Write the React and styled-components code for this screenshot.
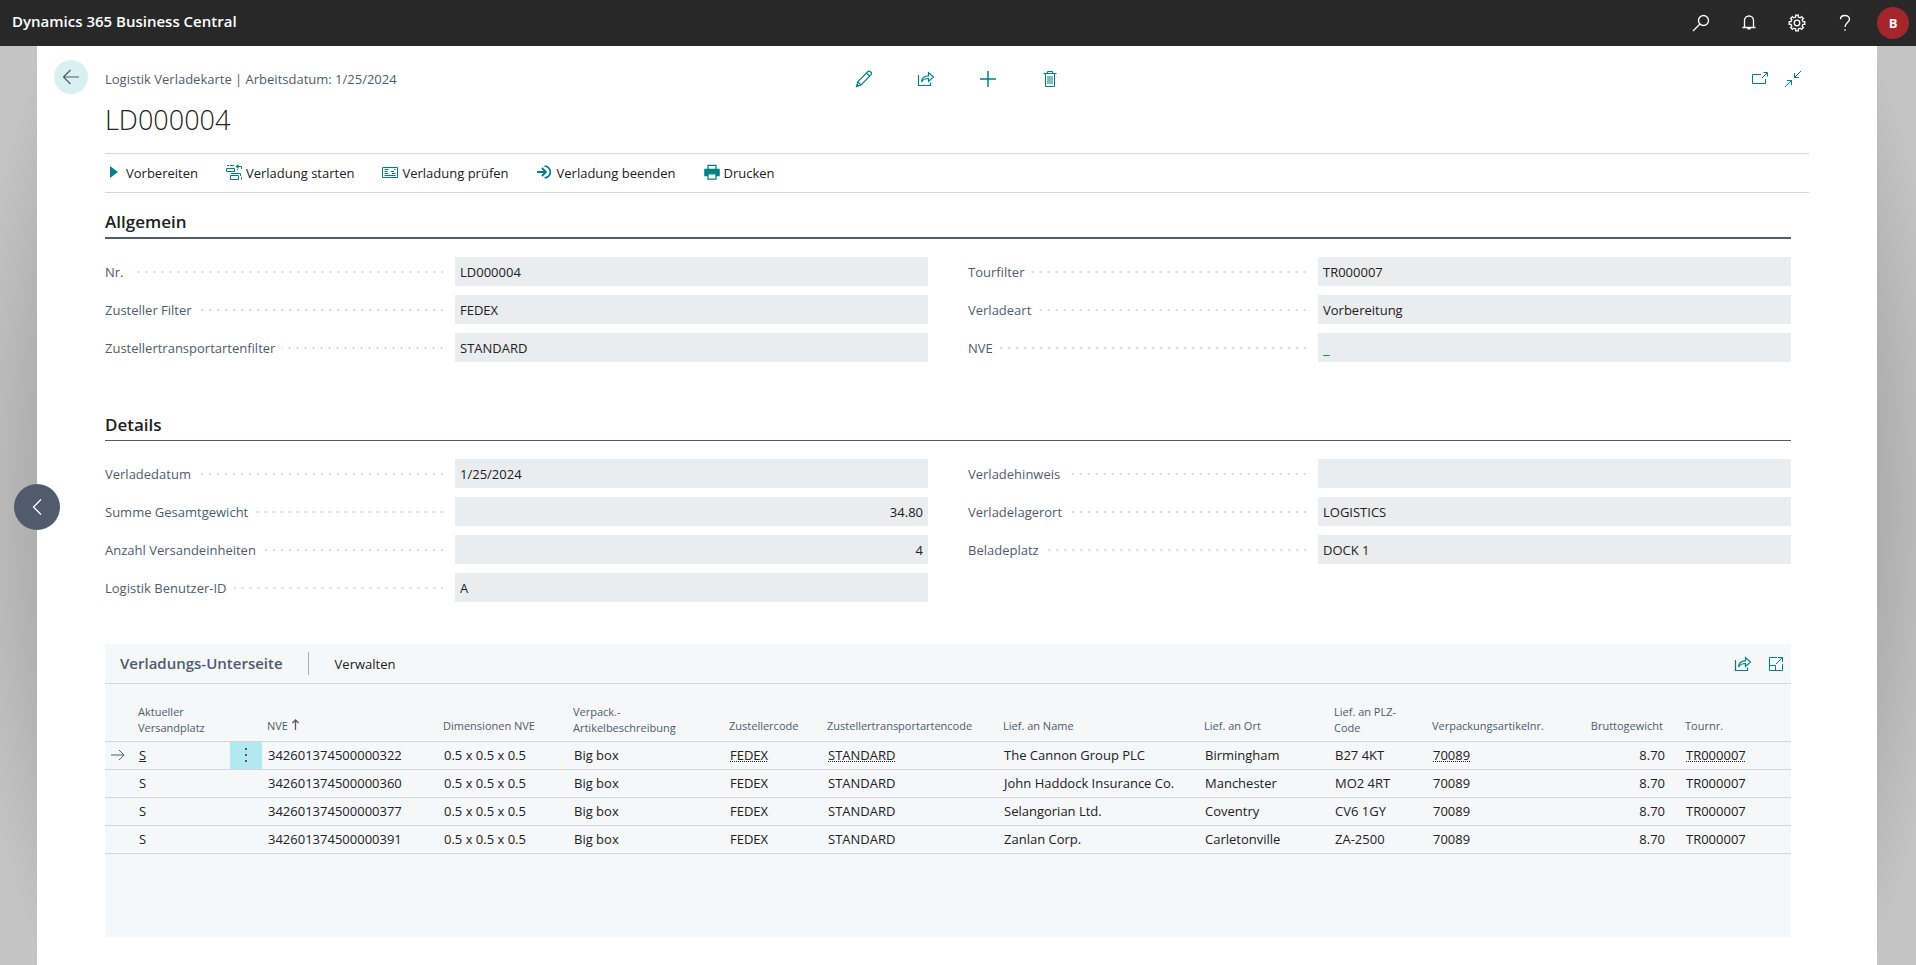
import React from "react";
import styled, { createGlobalStyle, css } from "styled-components";

const GlobalStyle = createGlobalStyle`
  * {
    box-sizing: border-box;
  }

  body {
    margin: 0;
    background: #c4c4c4;
    color: #212121;
    font-family: "Open Sans", "Noto Sans", sans-serif;
    font-size: 13px;
    line-height: 18px;
  }

  button,
  input {
    font: inherit;
    color: inherit;
  }

  button {
    padding: 0;
    border: 0;
    background: none;
    cursor: pointer;
  }
`;

const Shell = styled.div`
  display: flex;
  flex-direction: column;
  height: 100vh;
  overflow: hidden;
`;

const TopBar = styled.header`
  display: flex;
  flex: none;
  align-items: center;
  justify-content: space-between;
  height: 46px;
  padding: 0 7px 4px 12px;
  background: #282828;
  color: #fff;
  z-index: 2;
`;

const Product = styled.span`
  font-size: 15px;
  font-weight: 600;
`;

const TopActions = styled.div`
  display: flex;
  align-items: center;
  gap: 16px;
  padding-top: 3px;
`;

const TopButton = styled.button`
  display: flex;
  align-items: center;
  justify-content: center;
  width: 32px;
  height: 32px;
`;

const Avatar = styled(TopButton)`
  border-radius: 50%;
  background: #a4262c;
  font-size: 13px;
  font-weight: 700;
`;

const Stage = styled.div`
  position: relative;
  display: flex;
  flex: 1;
  padding: 0 39px 0 37px;
  background: radial-gradient(ellipse 55% 130% at center, #adadad 87%, #b9b9b9 91%, #c4c4c4 95%);
`;

const Card = styled.main`
  flex: 1;
  min-width: 0;
  padding: 14px 68px 0 17px;
  background: #fff;
`;

const PreviousButton = styled.button`
  position: absolute;
  left: 14px;
  top: 438px;
  display: flex;
  align-items: center;
  justify-content: center;
  width: 46px;
  height: 46px;
  border-radius: 50%;
  background: #505c6d;
`;

const PageHead = styled.div`
  display: grid;
  grid-template-columns: 34px 1fr;
  column-gap: 17px;
`;

const BackButton = styled.button`
  display: flex;
  align-items: center;
  justify-content: center;
  width: 34px;
  height: 34px;
  border-radius: 50%;
  background: #d9f0f2;
`;

const HeadLine = styled.div`
  display: grid;
  grid-template-columns: 1fr auto 1fr;
  align-items: center;
  height: 34px;
  padding-top: 4px;
`;

const Caption = styled.span`
  color: #505c6d;
`;

const RecordActions = styled.div`
  display: flex;
  gap: 44px;
`;

const WindowActions = styled.div`
  display: flex;
  justify-content: flex-end;
  gap: 15px;
  padding-right: 7px;
`;

const IconButton = styled.button`
  display: flex;
  width: 18px;
  height: 18px;
`;

const Title = styled.h1`
  grid-column: 2;
  margin: 8px 0 15px;
  font-size: 27px;
  font-weight: 300;
  line-height: 36px;
`;

const ActionBar = styled.div`
  display: flex;
  gap: 28px;
  height: 40px;
  margin-left: 51px;
  padding-left: 4px;
  border-top: 1px solid #d4d6d9;
  border-bottom: 1px solid #d4d6d9;
`;

const Action = styled.button`
  display: flex;
  align-items: center;
  gap: 4px;

  svg {
    margin-bottom: 2px;
  }
`;

const Sections = styled.div`
  margin: 15px 18px 0 51px;
`;

const Group = styled.section`
  margin-bottom: 49px;
`;

const GroupTitle = styled.h2`
  margin: 0 0 18px;
  padding-bottom: 1px;
  border-bottom: ${({ $thick }) => ($thick ? 2 : 1)}px solid #505c6d;
  font-size: 17px;
  font-weight: 600;
  line-height: 28px;
`;

const Fields = styled.div`
  display: grid;
  grid-template-columns: 1fr 1fr;
  column-gap: 40px;
`;

const FieldColumn = styled.div`
  display: flex;
  flex-direction: column;
  gap: 9px;
`;

const FieldRow = styled.div`
  display: flex;
  align-items: center;
  height: 29px;
`;

const FieldLabel = styled.label`
  display: flex;
  flex: 1;
  align-items: center;
  padding-right: 12px;
  color: #505c6d;
  white-space: nowrap;

  &::after {
    content: "";
    flex: 1;
    height: 2px;
    margin: 1px 0 0 7px;
    background: linear-gradient(90deg, transparent 6px, #d6d7d9 6px) right top / 8px 2px;
  }
`;

const FieldInput = styled.input`
  width: 473px;
  height: 29px;
  padding: 0 5px;
  border: 0;
  background: #ebecee;
  text-align: ${({ $numeric }) => ($numeric ? "right" : "left")};
  ${({ $link }) =>
    $link &&
    css`
      color: #008089;
      font-size: 15px;
    `}
`;

const ListPart = styled.section`
  height: 293px;
  margin-top: -7px;
  background: #f6f7f9;
`;

const ListHead = styled.div`
  display: flex;
  align-items: center;
  height: 40px;
  padding: 0 6px 0 15px;
  border-bottom: 1px solid #d4d6d9;
`;

const ListTitle = styled.h2`
  margin: 0;
  padding-right: 25px;
  border-right: 1px solid #a9aeb5;
  color: #505c6d;
  font-size: 15px;
  font-weight: 600;
  line-height: 23px;
`;

const ListMenu = styled.button`
  margin: 1px auto 0 26px;
`;

const ListIcons = styled.div`
  display: flex;
  gap: 15px;
`;

const Table = styled.table`
  width: 100%;
  table-layout: fixed;
  border-collapse: collapse;
`;

const Th = styled.th`
  height: 57px;
  padding: 0 ${({ $numeric }) => ($numeric ? 17 : 0)}px ${({ $twoLines }) => ($twoLines ? 5 : 7)}px 5px;
  border-bottom: 1px solid #d4d6d9;
  color: #505c6d;
  font-size: 11px;
  font-weight: 400;
  line-height: 16px;
  text-align: ${({ $numeric }) => ($numeric ? "right" : "left")};
  vertical-align: bottom;
  white-space: pre-line;
`;

const Td = styled.td`
  height: 28px;
  padding: ${({ $numeric }) => ($numeric ? "0 15px 0 0" : "0 0 0 6px")};
  border-bottom: 1px solid #d4d6d9;
  text-align: ${({ $numeric }) => ($numeric ? "right" : "left")};
  white-space: nowrap;
`;

const CellLink = styled.a`
  color: inherit;
  text-decoration: underline ${({ $solid }) => ($solid ? "solid" : "dotted")} 1px;
  text-underline-offset: 1px;
`;

const RowMenu = styled.button`
  display: flex;
  align-items: center;
  justify-content: center;
  width: 32px;
  height: 27px;
  margin-left: -6px;
  background: #b3e8f0;
`;

const RowArrow = styled.span`
  display: flex;
`;

const TEAL = "#008089";

function Icon({ size = 18, color = TEAL, width = 1, children }) {
  return (
    <svg
      width={size}
      height={size}
      viewBox="0 0 18 18"
      fill="none"
      stroke={color}
      strokeWidth={width}
      aria-hidden="true"
    >
      {children}
    </svg>
  );
}

const SearchIcon = () => (
  <Icon color="#fff" width={1.3}>
    <circle cx="11.5" cy="6.5" r="5" />
    <path d="M8 10 L1 17" />
  </Icon>
);

const BellIcon = () => (
  <Icon color="#fff" width={1.3}>
    <path d="M2.5 13.5h13M4.500 13.500V6.500a4.500 4.500 0 0 1 9 0v7M7.500 14a1.600 1.600 0 0 0 3 0" />
  </Icon>
);

const GearIcon = () => {
  const teeth = [];
  for (let i = 0; i < 8; i += 1) {
    const a = (i * Math.PI) / 4;
    [
      [6.1, -0.22],
      [7.9, -0.17],
      [7.9, 0.17],
      [6.1, 0.22],
    ].forEach(([r, d]) => {
      teeth.push(`${(9 + r * Math.cos(a + d)).toFixed(2)},${(9 + r * Math.sin(a + d)).toFixed(2)}`);
    });
  }
  return (
    <Icon color="#fff" width={1.3}>
      <polygon points={teeth.join(" ")} />
      <circle cx="9" cy="9" r="2.8" />
    </Icon>
  );
};

const HelpIcon = () => (
  <Icon color="#fff" width={1.4}>
    <path d="M4.5 5.2C4.5 2.8 6.5 1.5 9 1.5s4.5 1.5 4.5 3.8C13.5 8.5 9 8.7 9 13M9 15.2v1.6" />
  </Icon>
);

const BackIcon = () => (
  <Icon color="#505c6d" width={1.2}>
    <path d="M17 9H1.5M8.5 2 1.5 9l7 7" />
  </Icon>
);

const ChevronIcon = () => (
  <Icon color="#fff" width={1.3}>
    <path d="M13 1.5 5.5 9l7.5 7.5" />
  </Icon>
);

const PencilIcon = () => (
  <Icon width={1.2}>
    <path d="M1.5 16.5 2.8 11.8 12.5 2a2 2 0 0 1 3.2 3.2L6 15ZM2.8 11.8 6 15M11.5 3l3.3 3.3M1.5 16.5l2-.6-1.4-1.4Z" />
  </Icon>
);

const ShareIcon = () => (
  <Icon width={1.2}>
    <path d="M1.5 5v10.500h12V12.500M4.500 12c.3-4.500 3-6.200 7-6.200V2.500L16.500 7l-5 4.500V8.500C8 8.500 6 9.500 4.500 12Z" />
  </Icon>
);

const PlusIcon = () => (
  <Icon width={1.5}>
    <path d="M1 9h16M9 1v16" />
  </Icon>
);

const TrashIcon = () => (
  <Icon>
    <path d="M2.5 3.5h13M6.5 3.5v-2h5v2M4.5 3.5v13h9v-13M7 6v8M9 6v8M11 6v8" />
  </Icon>
);

const PopOutIcon = () => (
  <Icon>
    <path d="M10 4.5H1.5v9h13V9M11 8l5-5M12.5 2.5h4v4" />
  </Icon>
);

const CollapseIcon = () => (
  <Icon>
    <path d="M17 1l-6.5 6.5M10.5 3v4.5H15M1 17l6.5-6.5M3 10.5h4.5V15" />
  </Icon>
);

const ExpandIcon = () => (
  <Icon>
    <path d="M10 2.5H2.5v13h13V9M11 2.5h4.5V7M15.5 2.5 9 9M2.5 10.500h6v5" />
  </Icon>
);

const PlayIcon = () => (
  <svg width="13" height="18" viewBox="0 0 13 18" aria-hidden="true">
    <path d="M1 3v12l8-6Z" fill={TEAL} />
  </svg>
);

const StartIcon = () => (
  <svg width="16" height="16" viewBox="0 0 16 16" fill="none" stroke={TEAL} aria-hidden="true">
    <path d="M.5 4.500h8v3h-8ZM4.500 11.500h8v4h-8ZM1 1.500h2M4 1.500h4M5 9.500h9.500V12M15.500 13v2.500M11 5.500h1M15.500 5V2.500H10" />
    <path d="M9.500 2.500 12.500 0v5Z" fill={TEAL} stroke="none" />
  </svg>
);

const CheckIcon = () => (
  <svg width="16" height="16" viewBox="0 0 16 16" fill="none" stroke={TEAL} aria-hidden="true">
    <path d="M.5 3.500h15v10H.5ZM2.500 5.500h4M2.500 7.500h3M2.500 9.500h4M2.500 11.500h11M9 7.500h3M12 5.500h1.500M10 9.500h3.500" />
  </svg>
);

const FinishIcon = () => (
  <Icon size={16}>
    <path d="M0 9h10M5.5 4.500 10 9l-4.500 4.500" strokeWidth="2.200" />
    <path d="M8.500 2.500a6.500 6.500 0 1 1 0 13" strokeWidth="2" />
  </Icon>
);

const PrintIcon = () => (
  <Icon size={16} width={1.4}>
    <path d="M4.5 6V1.500h9V6" />
    <path d="M1 6h16v7H1Z" fill={TEAL} />
    <path d="M4.5 11h9v6h-9Z" fill="#fff" />
  </Icon>
);

const DotsIcon = () => (
  <svg width="4" height="16" viewBox="0 0 4 16" fill="#505c6d" aria-hidden="true">
    <path d="M1 1h2v2H1ZM1 7h2v2H1ZM1 13h2v2H1Z" />
  </svg>
);

const ArrowRightIcon = () => (
  <svg width="14" height="14" viewBox="0 0 14 14" fill="none" stroke="#505c6d" aria-hidden="true">
    <path d="M0 7h13M8 2l5 5-5 5" />
  </svg>
);

const SortIcon = () => (
  <svg width="9" height="11" viewBox="0 0 9 11" fill="none" stroke="#505c6d" strokeWidth="1.3" aria-hidden="true">
    <path d="M4.5 11V1M1.500 4l3-3 3 3" />
  </svg>
);

const actions = [
  { label: "Vorbereiten", icon: PlayIcon },
  { label: "Verladung starten", icon: StartIcon },
  { label: "Verladung prüfen", icon: CheckIcon },
  { label: "Verladung beenden", icon: FinishIcon },
  { label: "Drucken", icon: PrintIcon },
];

const general = [
  [
    { id: "nr", label: "Nr.", value: "LD000004" },
    { id: "zusteller", label: "Zusteller Filter", value: "FEDEX" },
    { id: "transportart", label: "Zustellertransportartenfilter", value: "STANDARD" },
  ],
  [
    { id: "tour", label: "Tourfilter", value: "TR000007" },
    { id: "art", label: "Verladeart", value: "Vorbereitung" },
    { id: "nve", label: "NVE", value: "_", link: true },
  ],
];

const details = [
  [
    { id: "datum", label: "Verladedatum", value: "1/25/2024" },
    { id: "gewicht", label: "Summe Gesamtgewicht", value: "34.80", numeric: true },
    { id: "anzahl", label: "Anzahl Versandeinheiten", value: "4", numeric: true },
    { id: "benutzer", label: "Logistik Benutzer-ID", value: "A" },
  ],
  [
    { id: "hinweis", label: "Verladehinweis", value: "" },
    { id: "lagerort", label: "Verladelagerort", value: "LOGISTICS" },
    { id: "beladeplatz", label: "Beladeplatz", value: "DOCK 1" },
  ],
];

const columns = [
  { key: "arrow", label: "", width: 28 },
  { key: "place", label: "Aktueller\nVersandplatz", width: 97, link: "solid" },
  { key: "menu", label: "", width: 32 },
  { key: "nve", label: "NVE", width: 176, sorted: true },
  { key: "dim", label: "Dimensionen NVE", width: 130 },
  { key: "pack", label: "Verpack.-\nArtikelbeschreibung", width: 156 },
  { key: "carrier", label: "Zustellercode", width: 98, link: "dotted" },
  { key: "mode", label: "Zustellertransportartencode", width: 176, link: "dotted" },
  { key: "name", label: "Lief. an Name", width: 201 },
  { key: "city", label: "Lief. an Ort", width: 130 },
  { key: "zip", label: "Lief. an PLZ-\nCode", width: 98 },
  { key: "item", label: "Verpackungsartikelnr.", width: 156, link: "dotted" },
  { key: "weight", label: "Bruttogewicht", width: 97, numeric: true },
  { key: "tour", label: "Tournr.", link: "dotted" },
];

const shared = {
  place: "S",
  dim: "0.5 x 0.5 x 0.5",
  pack: "Big box",
  carrier: "FEDEX",
  mode: "STANDARD",
  item: "70089",
  weight: "8.70",
  tour: "TR000007",
};

const rows = [
  { ...shared, nve: "342601374500000322", name: "The Cannon Group PLC", city: "Birmingham", zip: "B27 4KT" },
  { ...shared, nve: "342601374500000360", name: "John Haddock Insurance Co.", city: "Manchester", zip: "MO2 4RT" },
  { ...shared, nve: "342601374500000377", name: "Selangorian Ltd.", city: "Coventry", zip: "CV6 1GY" },
  { ...shared, nve: "342601374500000391", name: "Zanlan Corp.", city: "Carletonville", zip: "ZA-2500" },
];

const ColumnDef = styled.col`
  width: ${({ $width }) => ($width ? `${$width}px` : "auto")};
`;

function FieldGroup({ title, thick, fields }) {
  return (
    <Group>
      <GroupTitle $thick={thick}>{title}</GroupTitle>
      <Fields>
        {fields.map((column) => (
          <FieldColumn key={column[0].id}>
            {column.map((field) => (
              <FieldRow key={field.id}>
                <FieldLabel htmlFor={field.id}>{field.label}</FieldLabel>
                <FieldInput
                  id={field.id}
                  defaultValue={field.value}
                  readOnly
                  $numeric={field.numeric}
                  $link={field.link}
                />
              </FieldRow>
            ))}
          </FieldColumn>
        ))}
      </Fields>
    </Group>
  );
}

function Cell({ column, row, selected }) {
  if (column.key === "arrow") {
    return selected ? (
      <RowArrow>
        <ArrowRightIcon />
      </RowArrow>
    ) : null;
  }
  if (column.key === "menu") {
    return selected ? (
      <RowMenu aria-label="Weitere Optionen">
        <DotsIcon />
      </RowMenu>
    ) : null;
  }
  if (selected && column.link) {
    return (
      <CellLink href="#" $solid={column.link === "solid"}>
        {row[column.key]}
      </CellLink>
    );
  }
  return row[column.key];
}

function Lines() {
  return (
    <ListPart>
      <ListHead>
        <ListTitle>Verladungs-Unterseite</ListTitle>
        <ListMenu>Verwalten</ListMenu>
        <ListIcons>
          <IconButton aria-label="Teilen">
            <ShareIcon />
          </IconButton>
          <IconButton aria-label="Erweitern">
            <ExpandIcon />
          </IconButton>
        </ListIcons>
      </ListHead>
      <Table>
        <colgroup>
          {columns.map((column) => (
            <ColumnDef key={column.key} $width={column.width} />
          ))}
        </colgroup>
        <thead>
          <tr>
            {columns.map((column) => (
              <Th key={column.key} $numeric={column.numeric} $twoLines={column.label.includes("\n")}>
                {column.label} {column.sorted && <SortIcon />}
              </Th>
            ))}
          </tr>
        </thead>
        <tbody>
          {rows.map((row, index) => (
            <tr key={row.nve}>
              {columns.map((column) => (
                <Td key={column.key} $numeric={column.numeric}>
                  <Cell column={column} row={row} selected={index === 0} />
                </Td>
              ))}
            </tr>
          ))}
        </tbody>
      </Table>
    </ListPart>
  );
}

function App() {
  return (
    <>
      <GlobalStyle />
      <Shell>
        <TopBar>
          <Product>Dynamics 365 Business Central</Product>
          <TopActions>
            <TopButton aria-label="Suchen">
              <SearchIcon />
            </TopButton>
            <TopButton aria-label="Benachrichtigungen">
              <BellIcon />
            </TopButton>
            <TopButton aria-label="Einstellungen">
              <GearIcon />
            </TopButton>
            <TopButton aria-label="Hilfe">
              <HelpIcon />
            </TopButton>
            <Avatar>B</Avatar>
          </TopActions>
        </TopBar>
        <Stage>
          <Card>
            <PageHead>
              <BackButton aria-label="Zurück">
                <BackIcon />
              </BackButton>
              <HeadLine>
                <Caption>Logistik Verladekarte | Arbeitsdatum: 1/25/2024</Caption>
                <RecordActions>
                  <IconButton aria-label="Bearbeiten">
                    <PencilIcon />
                  </IconButton>
                  <IconButton aria-label="Teilen">
                    <ShareIcon />
                  </IconButton>
                  <IconButton aria-label="Neu">
                    <PlusIcon />
                  </IconButton>
                  <IconButton aria-label="Löschen">
                    <TrashIcon />
                  </IconButton>
                </RecordActions>
                <WindowActions>
                  <IconButton aria-label="In neuem Fenster öffnen">
                    <PopOutIcon />
                  </IconButton>
                  <IconButton aria-label="Verkleinern">
                    <CollapseIcon />
                  </IconButton>
                </WindowActions>
              </HeadLine>
              <Title>LD000004</Title>
            </PageHead>
            <ActionBar>
              {actions.map(({ label, icon: ActionIcon }) => (
                <Action key={label}>
                  <ActionIcon />
                  {label}
                </Action>
              ))}
            </ActionBar>
            <Sections>
              <FieldGroup title="Allgemein" thick fields={general} />
              <FieldGroup title="Details" fields={details} />
              <Lines />
            </Sections>
          </Card>
          <PreviousButton aria-label="Vorheriger Datensatz">
            <ChevronIcon />
          </PreviousButton>
        </Stage>
      </Shell>
    </>
  );
}

export default App;
